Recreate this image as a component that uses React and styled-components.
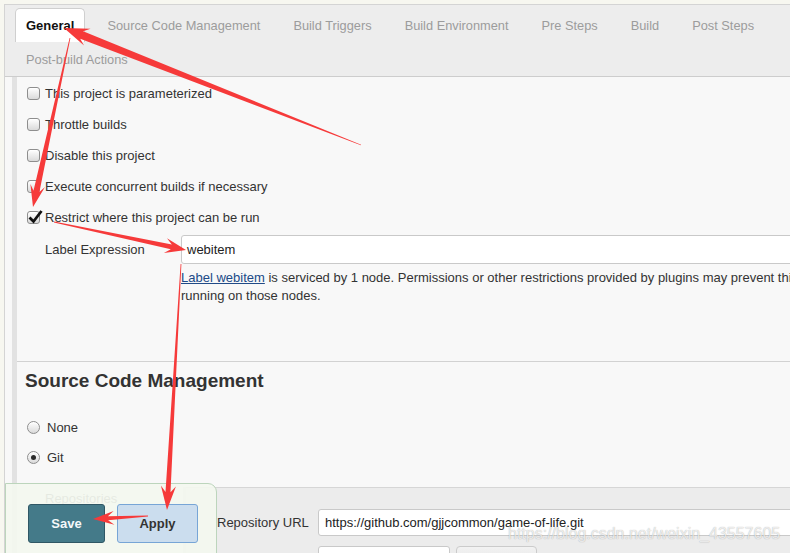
import React from "react";
import styled, { createGlobalStyle } from "styled-components";

const GlobalStyle = createGlobalStyle`
  html, body {
    margin: 0;
    padding: 0;
    background: #f8f8f8;
    overflow: hidden;
  }
  * { box-sizing: border-box; }
`;

const Page = styled.div`
  position: relative;
  width: 790px;
  height: 553px;
  overflow: hidden;
  padding-top: 4px;
  background: #f7f7f0;
  font-family: "Liberation Sans", Arial, sans-serif;
  font-size: 13px;
  color: #333;
`;

const Frame = styled.div`
  margin-left: 4px;
  height: 549px;
  border-top: 1px solid #d4d4d4;
  border-left: 1px solid #d4d4d4;
  display: flex;
  flex-direction: column;
`;

const TabBar = styled.div`
  display: flex;
  flex-wrap: wrap;
  column-gap: 11px;
  height: 72px;
  padding: 3px 0 0 10px;
  background: #ededed;
  border-bottom: 1px solid #cdcdcd;
`;

const Tab = styled.div`
  height: 34px;
  line-height: 33px;
  padding: 0 10px;
  border: 1px solid ${(p) => (p.$active ? "#cfcfcf" : "transparent")};
  border-bottom: none;
  border-radius: 5px 5px 0 0;
  background: ${(p) => (p.$active ? "#fff" : "transparent")};
  color: ${(p) => (p.$active ? "#111" : "#9c9c9c")};
  font-weight: ${(p) => (p.$active ? "bold" : "normal")};
  font-size: ${(p) => (p.$active ? "13px" : "12.8px")};
  white-space: nowrap;
`;

const Content = styled.div`
  flex: 1;
  display: flex;
  padding-left: 7px;
  background: #f8f8f8;
  overflow: hidden;
`;

const Body = styled.div`
  flex: 1;
  min-width: 0;
  border-left: 5px solid #e2e2e2;
  background: #f8f8f8;
  display: flex;
  flex-direction: column;
`;

const Section = styled.div`
  padding-left: 10px;
`;

const CheckRow = styled.div`
  height: 31px;
  display: flex;
  align-items: center;
  padding-top: 1px;
`;

const Box = styled.span`
  position: relative;
  flex: none;
  width: 13px;
  height: 13px;
  margin-right: 5px;
  border: 1px solid #8e8e8e;
  border-radius: ${(p) => (p.$round ? "50%" : "3px")};
  background: linear-gradient(#ffffff, #dadada);
  box-shadow: inset 0 1px 0 #fff;
`;

const Tick = styled.svg`
  position: absolute;
  left: 0px;
  top: -3px;
`;

const Dot = styled.span`
  position: absolute;
  left: 3px;
  top: 3px;
  width: 5px;
  height: 5px;
  border-radius: 50%;
  background: #2b2b2b;
`;

const RadioRow = styled(CheckRow)`
  height: 30px;
  gap: 2px;
`;

const FieldRow = styled.div`
  display: flex;
  padding: 3px 0 0 18px;
`;

const FieldLabel = styled.div`
  width: 136px;
  flex: none;
  line-height: 29px;
`;

const FieldCol = styled.div`
  width: 720px;
  flex: none;
`;

const TextInput = styled.div`
  height: ${(p) => p.$h || 29}px;
  width: ${(p) => (p.$w ? `${p.$w}px` : "100%")};
  padding-left: ${(p) => p.$pad || 5}px;
  line-height: ${(p) => (p.$h || 29) - 2}px;
  background: #fff;
  border: 1px solid #c9c9c9;
  border-radius: 3px;
  color: #222;
  white-space: nowrap;
`;

const Help = styled.div`
  margin: 5px 0 56px;
  line-height: 18px;
  white-space: nowrap;
  color: #333;
`;

const HelpLink = styled.a`
  color: #204a87;
  text-decoration: underline;
`;

const Divider = styled.div`
  height: 1px;
  flex: none;
  background: #d2d2d2;
`;

const Heading = styled.h2`
  margin: 7px 0 19px 8px;
  font-size: 19px;
  line-height: 24px;
  font-weight: bold;
  color: #333;
`;

const RepoRow = styled.div`
  display: flex;
  margin-top: 15px;
  flex: 1;
`;

const RepoLabel = styled.div`
  width: 166px;
  flex: none;
  padding: 3px 0 0 28px;
  line-height: 18px;
  color: #333;
`;

const RepoBox = styled.div`
  flex: 1;
  background: #ececec;
  border-top: 1px solid #d6d6d6;
  border-left: 3px solid #e4e4e4;
  padding: 21px 0 0 31px;
`;

const RepoLine = styled.div`
  display: flex;
  align-items: center;
  gap: 6px;
  margin-bottom: 10px;
`;

const RepoName = styled.div`
  width: 95px;
  flex: none;
`;

const GhostButton = styled.div`
  width: 81px;
  height: 27px;
  border: 1px solid #cbcbcb;
  border-radius: 4px;
  background: linear-gradient(#f2f2f2, #e2e2e2);
`;

const SaveBar = styled.div`
  position: absolute;
  left: 5px;
  top: 483px;
  width: 212px;
  height: 80px;
  display: flex;
  gap: 12px;
  padding: 20px 0 0 22px;
  background: rgba(243, 247, 239, 0.93);
  border: 1px solid #bcd5bc;
  border-radius: 0 9px 0 0;
`;

const Button = styled.div`
  width: ${(p) => p.$w}px;
  height: 39px;
  display: flex;
  align-items: center;
  justify-content: center;
  border-radius: 3px;
  font-weight: bold;
  font-size: 13px;
  background: ${(p) => (p.$primary ? "#447a89" : "#cbddee")};
  border: 1px solid ${(p) => (p.$primary ? "#2f5765" : "#77a5d6")};
  color: ${(p) => (p.$primary ? "#f4f8f9" : "#333")};
`;

const Watermark = styled.div`
  position: absolute;
  left: 508px;
  top: 525px;
  font-size: 16px;
  color: rgba(255, 255, 255, 0.75);
  text-shadow: 0 0 1px rgba(0, 0, 0, 0.35);
  white-space: nowrap;
  pointer-events: none;
`;

const Arrows = styled.svg`
  position: absolute;
  left: 0;
  top: 0;
  pointer-events: none;
`;

const tabs = [
  "General",
  "Source Code Management",
  "Build Triggers",
  "Build Environment",
  "Pre Steps",
  "Build",
  "Post Steps",
  "Post-build Actions",
];

const options = [
  { label: "This project is parameterized" },
  { label: "Throttle builds" },
  { label: "Disable this project" },
  { label: "Execute concurrent builds if necessary" },
  { label: "Restrict where this project can be run", checked: true },
];

// tapered red arrow: thin tail, thick near the head
const arrowPoints = (tail, tip, w0, ws, lh, wh) => {
  const dx = tip[0] - tail[0];
  const dy = tip[1] - tail[1];
  const len = Math.hypot(dx, dy);
  const ux = dx / len;
  const uy = dy / len;
  const nx = -uy;
  const ny = ux;
  const bx = tip[0] - ux * lh;
  const by = tip[1] - uy * lh;
  const pts = [
    [tail[0] + (nx * w0) / 2, tail[1] + (ny * w0) / 2],
    [bx + (nx * ws) / 2 + ux * 3, by + (ny * ws) / 2 + uy * 3],
    [bx + (nx * wh) / 2 - ux * 3, by + (ny * wh) / 2 - uy * 3],
    tip,
    [bx - (nx * wh) / 2 - ux * 3, by - (ny * wh) / 2 - uy * 3],
    [bx - (nx * ws) / 2 + ux * 3, by - (ny * ws) / 2 + uy * 3],
    [tail[0] - (nx * w0) / 2, tail[1] - (ny * w0) / 2],
  ];
  return pts.map((p) => `${p[0].toFixed(1)},${p[1].toFixed(1)}`).join(" ");
};

const arrows = [
  { tail: [361, 145], tip: [64, 28], w0: 0.6, ws: 8, lh: 22, wh: 18 },
  { tail: [70, 38], tip: [33, 207], w0: 0.8, ws: 6, lh: 19, wh: 15 },
  { tail: [54, 222], tip: [186, 250], w0: 1, ws: 5, lh: 18, wh: 15 },
  { tail: [181, 264], tip: [167, 510], w0: 0.8, ws: 5, lh: 21, wh: 15 },
  { tail: [148, 516], tip: [93, 519], w0: 1, ws: 4, lh: 18, wh: 14 },
];

const Checkbox = ({ checked }) => (
  <Box>
    {checked && (
      <Tick width="15" height="15" viewBox="0 0 15 15">
        <path d="M1.5 8.5 L5.5 12.5 L13.5 2" fill="none" stroke="#111" strokeWidth="2.8" />
      </Tick>
    )}
  </Box>
);

const Radio = ({ checked }) => <Box $round>{checked && <Dot />}</Box>;

export default function App() {
  return (
    <Page>
      <GlobalStyle />
      <Frame>
        <TabBar>
          {tabs.map((t, i) => (
            <Tab key={t} $active={i === 0}>
              {t}
            </Tab>
          ))}
        </TabBar>
        <Content>
          <Body>
            <Section>
              {options.map((o) => (
                <CheckRow key={o.label}>
                  <Checkbox checked={o.checked} />
                  {o.label}
                </CheckRow>
              ))}
              <FieldRow>
                <FieldLabel>Label Expression</FieldLabel>
                <FieldCol>
                  <TextInput>webitem</TextInput>
                  <Help>
                    <HelpLink>Label webitem</HelpLink> is serviced by 1 node. Permissions or other
                    restrictions provided by plugins may prevent this job from
                    <br />
                    running on those nodes.
                  </Help>
                </FieldCol>
              </FieldRow>
            </Section>
            <Divider />
            <Heading>Source Code Management</Heading>
            <Section>
              <RadioRow>
                <Radio />
                None
              </RadioRow>
              <RadioRow>
                <Radio checked />
                Git
              </RadioRow>
            </Section>
            <RepoRow>
              <RepoLabel>Repositories</RepoLabel>
              <RepoBox>
                <RepoLine>
                  <RepoName>Repository URL</RepoName>
                  <TextInput $h={27} $pad={6} $w={520}>
                    https://github.com/gjjcommon/game-of-life.git
                  </TextInput>
                </RepoLine>
                <RepoLine>
                  <RepoName />
                  <TextInput $h={27} $w={132} />
                  <GhostButton />
                </RepoLine>
              </RepoBox>
            </RepoRow>
          </Body>
        </Content>
      </Frame>

      <SaveBar>
        <Button $primary $w={77}>Save</Button>
        <Button $w={81}>Apply</Button>
      </SaveBar>

      <Watermark>https://blog.csdn.net/weixin_43557605</Watermark>

      <Arrows width="790" height="553" viewBox="0 0 790 553">
        {arrows.map((a, i) => (
          <polygon
            key={i}
            points={arrowPoints(a.tail, a.tip, a.w0, a.ws, a.lh, a.wh)}
            fill="#f63a3a"
          />
        ))}
      </Arrows>
    </Page>
  );
}
